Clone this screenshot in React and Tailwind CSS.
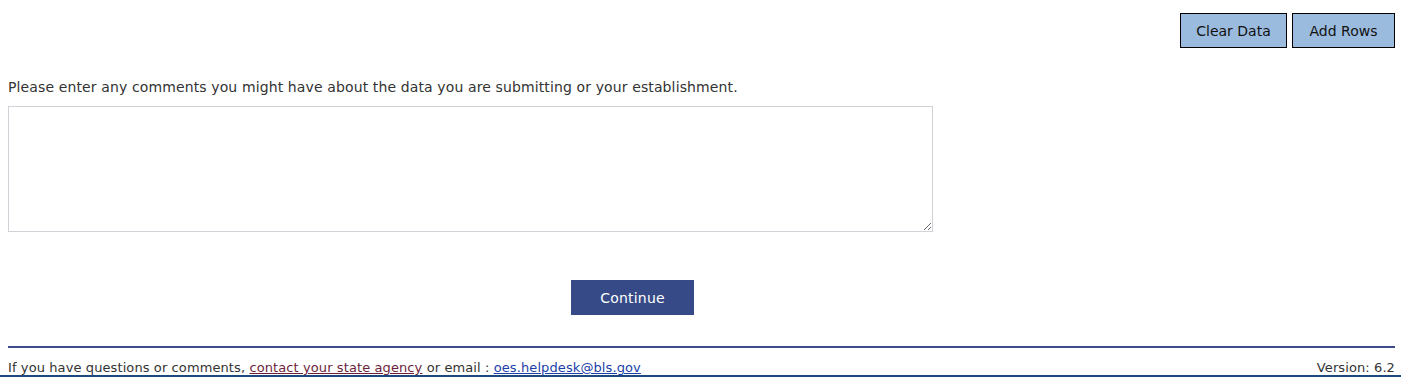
export default function App() {
  const font = { fontFamily: '"DejaVu Sans", Verdana, sans-serif' };
  return (
    <div className="w-[1401px] h-[377px] overflow-hidden bg-white text-[#333333] text-[13px] relative" style={font}>
      <div className="flex justify-end gap-[5px] pt-[13px] pr-[6px]">
        <button className="h-[35px] w-[107px] bg-[#9bbbde] border border-black text-[#111] text-[14px] leading-none">Clear Data</button>
        <button className="h-[35px] w-[103px] bg-[#9bbbde] border border-black text-[#111] text-[14px] leading-none">Add Rows</button>
      </div>
      <div className="px-[8px] mt-[30px] leading-[18px] text-[14px] tracking-[0.12px]">Please enter any comments you might have about the data you are submitting or your establishment.</div>
      <div className="px-[8px] mt-[10px]">
        <textarea className="block w-[925px] h-[126px] border border-[#cfd3d8] resize-y outline-none" />
      </div>
      <div className="flex mt-[48px] pl-[571px]">
        <button className="h-[35px] w-[123px] bg-[#354a87] text-white text-[14px] leading-none tracking-[0.2px]">Continue</button>
      </div>
      <div className="mr-[6px] ml-[8px] mt-[31px] h-[2px] bg-[#3b4b8b]"></div>
      <div className="ml-[8px] mr-[6px] mt-[11px] flex justify-between leading-[17px] tracking-[0.1px]">
        <div>
          If you have questions or comments, <a href="#" className="text-[#6d1f3d] underline">contact your state agency</a> or email : <a href="#" className="text-[#1a3fa8] underline">oes.helpdesk@bls.gov</a>
        </div>
        <div>Version: 6.2</div>
      </div>
      <div className="absolute left-0 right-0 bottom-0 h-[2px] bg-[#1c4a7c]"></div>
    </div>
  );
}
